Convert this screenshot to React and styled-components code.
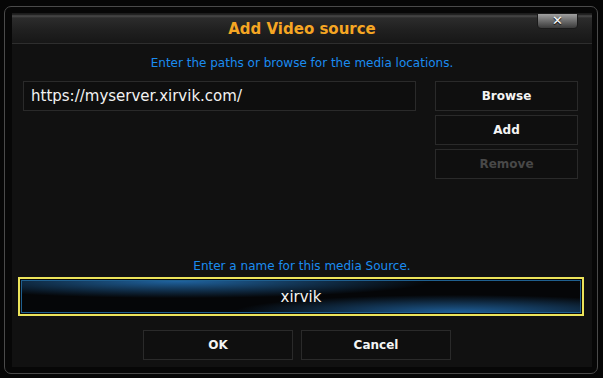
import styled, { createGlobalStyle } from "styled-components";

const Global = createGlobalStyle`
  html, body {
    margin: 0;
    padding: 0;
    background: #060606;
    width: 603px;
    height: 378px;
    overflow: hidden;
    font-family: "DejaVu Sans", "Liberation Sans", sans-serif;
  }
`;

const Page = styled.div`
  width: 603px;
  height: 378px;
  padding: 6px 5px 4px 4px;
  box-sizing: border-box;
  background: #060606;
`;

const Frame = styled.div`
  height: 100%;
  box-sizing: border-box;
  border: 1px solid #4a4a4a;
  border-radius: 7px;
  padding: 6px 5px 6px 7px;
  background: #070707;
`;

const Panel = styled.div`
  position: relative;
  height: 100%;
  background: #111111;
  display: flex;
  flex-direction: column;
`;

const TitleBar = styled.div`
  height: 31px;
  box-sizing: border-box;
  border-top: 1px solid #1c1c1c;
  border-bottom: 1px solid #2e2e2e;
  background: linear-gradient(
    to bottom,
    #161616 0px,
    #4a4a4a 2px,
    #2c2c2c 4px,
    #202020 16px,
    #161616 30px
  );
  display: flex;
  align-items: center;
  justify-content: center;
`;

const Title = styled.h1`
  margin: 0;
  font-size: 15px;
  font-weight: bold;
  color: #f5a623;
`;

const CloseButton = styled.button`
  position: absolute;
  top: 0;
  right: 14px;
  width: 41px;
  height: 16px;
  padding: 0;
  border: 1px solid #1a1a1a;
  border-radius: 0 0 4px 4px;
  background: linear-gradient(to bottom, #a0a0a0 0%, #707070 45%, #3a3a3a 100%);
  color: #f8f8f8;
  font-size: 13px;
  font-weight: bold;
  line-height: 14px;
  font-family: "DejaVu Sans", sans-serif;
  text-shadow: 0 1px 1px #000;
`;

const Hint = styled.div`
  text-align: center;
  color: #1b8cf0;
  font-size: 12px;
  margin-top: ${(p) => p.$top}px;
`;

const SourceArea = styled.div`
  display: flex;
  gap: 19px;
  padding: 0 14px 0 11px;
  margin-top: 11px;
  flex: 1;
`;

const PathList = styled.div`
  flex: 1;
`;

const PathRow = styled.div`
  height: 30px;
  box-sizing: border-box;
  border: 1px solid #2a2a2a;
  background: #0e0e0e;
  color: #f2f2f2;
  font-size: 15px;
  display: flex;
  align-items: center;
  padding-left: 7px;
`;

const ButtonColumn = styled.div`
  width: 143px;
  display: flex;
  flex-direction: column;
  gap: 4px;
`;

const Button = styled.button`
  height: 30px;
  width: ${(p) => (p.$width ? `${p.$width}px` : "auto")};
  box-sizing: border-box;
  border: 1px solid #2a2a2a;
  background: #0f0f0f;
  color: ${(p) => (p.disabled ? "#484848" : "#f4f4f4")};
  font-family: "DejaVu Sans", sans-serif;
  font-size: 12px;
  font-weight: bold;
  padding: 0;
`;

const NameField = styled.div`
  margin: 4px 8px 0 6px;
  height: 39px;
  box-sizing: border-box;
  border: 2px solid #ece45a;
  padding: 1px;
  background: #0a0a0a;
`;

const NameInner = styled.div`
  height: 100%;
  box-sizing: border-box;
  border: 1px solid #1f5f8f;
  background:
    radial-gradient(ellipse 45% 55% at 28% 0%, rgba(40, 130, 210, 0.75), transparent 100%),
    radial-gradient(ellipse 40% 55% at 78% 100%, rgba(40, 130, 210, 0.7), transparent 100%),
    #050608;
  display: flex;
  align-items: center;
  justify-content: center;
  color: #f4f4f4;
  font-size: 15px;
`;

const Footer = styled.div`
  display: flex;
  justify-content: center;
  gap: 8px;
  margin: 14px 0 7px;
  padding-right: 10px;
`;

export default function App() {
  return (
    <>
      <Global />
      <Page>
        <Frame>
          <Panel>
            <TitleBar>
              <Title>Add Video source</Title>
            </TitleBar>
            <CloseButton>✕</CloseButton>
            <Hint $top={12}>Enter the paths or browse for the media locations.</Hint>
            <SourceArea>
              <PathList>
                <PathRow>https://myserver.xirvik.com/</PathRow>
              </PathList>
              <ButtonColumn>
                <Button>Browse</Button>
                <Button>Add</Button>
                <Button disabled>Remove</Button>
              </ButtonColumn>
            </SourceArea>
            <Hint $top={0}>Enter a name for this media Source.</Hint>
            <NameField>
              <NameInner>xirvik</NameInner>
            </NameField>
            <Footer>
              <Button $width={150}>OK</Button>
              <Button $width={150}>Cancel</Button>
            </Footer>
          </Panel>
        </Frame>
      </Page>
    </>
  );
}
